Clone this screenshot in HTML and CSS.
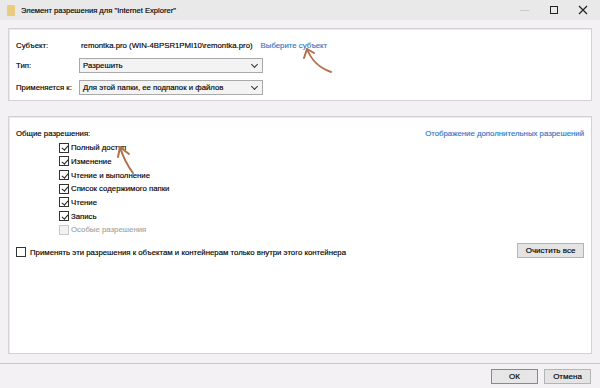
FILE: index.html
```html
<!DOCTYPE html>
<html lang="ru">
<head>
  <meta charset="UTF-8">
  <title>Элемент разрешения для "Internet Explorer"</title>
  <link rel="stylesheet" href="styles.css">
</head>
<body>
  <div class="window">
    <div class="titlebar">
      <span class="folder"></span>
      <span class="title">Элемент разрешения для "Internet Explorer"</span>
      <div class="controls">
        <span class="ctl min">&#8212;</span>
        <span class="ctl max"></span>
        <span class="ctl close">
          <svg width="10" height="10" viewBox="0 0 10 10"><path d="M1 1L9 9M9 1L1 9" stroke="#222" stroke-width="1.2"/></svg>
        </span>
      </div>
    </div>

    <div class="content">
      <div class="panel panel-top">
        <div class="row row-subject">
          <span class="label">Субъект:</span>
          <span class="value">remontka.pro (WIN-4BPSR1PMI10\remontka.pro)</span>
          <a class="link">Выберите субъект</a>
        </div>
        <div class="row row-type">
          <span class="label">Тип:</span>
          <div class="select"><span>Разрешить</span><span class="chev"></span></div>
        </div>
        <div class="row row-applies">
          <span class="label">Применяется к:</span>
          <div class="select"><span>Для этой папки, ее подпапок и файлов</span><span class="chev"></span></div>
        </div>
      </div>

      <div class="panel panel-perms">
        <div class="perms-head">
          <span>Общие разрешения:</span>
          <a class="link">Отображение дополнительных разрешений</a>
        </div>
        <ul class="perm-list">
          <li><span class="box checked"></span>Полный доступ</li>
          <li><span class="box checked"></span>Изменение</li>
          <li><span class="box checked"></span>Чтение и выполнение</li>
          <li><span class="box checked"></span>Список содержимого папки</li>
          <li><span class="box checked"></span>Чтение</li>
          <li><span class="box checked"></span>Запись</li>
          <li class="disabled"><span class="box"></span>Особые разрешения</li>
        </ul>
        <div class="apply-row">
          <label class="apply"><span class="box"></span>Применять эти разрешения к объектам и контейнерам только внутри этого контейнера</label>
          <button class="btn">Очистить все</button>
        </div>
      </div>
    </div>

    <div class="footer">
      <button class="btn btn-ok">ОК</button>
      <button class="btn">Отмена</button>
    </div>

    <!-- стрелки-пометки поверх окна -->
    <svg class="arrow arrow-link" width="40" height="34" viewBox="0 0 40 34">
      <path d="M6 2 C10 12 16 20 30 25" stroke="#b0714c" stroke-width="2" fill="none" stroke-linecap="round"/>
      <path d="M6 2 L3 11 M6 2 L13 6" stroke="#b0714c" stroke-width="2" fill="none" stroke-linecap="round"/>
    </svg>
    <svg class="arrow arrow-full" width="30" height="32" viewBox="0 0 30 32">
      <path d="M4 2 C7 12 11 20 17 28" stroke="#b0714c" stroke-width="2" fill="none" stroke-linecap="round"/>
      <path d="M4 2 L2 12 M4 2 L13 9" stroke="#b0714c" stroke-width="2" fill="none" stroke-linecap="round"/>
    </svg>
  </div>
</body>
</html>
```

FILE: styles.css
```css
body {
  margin: 0;
  font-family: "Liberation Sans", Arial, sans-serif;
  font-size: 7.8px;
  color: #000;
  -webkit-text-stroke: 0.15px currentColor;
}

.window {
  position: relative;
  width: 600px;
  height: 388px;
  background: #f4f1f4;
  display: flex;
  flex-direction: column;
}

.titlebar {
  height: 20px;
  background: #e9e9e9;
  display: flex;
  align-items: center;
}

.folder {
  width: 8px;
  height: 11px;
  margin-left: 7px;
  margin-right: 6px;
  background: #ebcb80;
  border-radius: 1px;
}

.title {
  flex: 1;
  font-size: 7.6px;
}

.controls {
  display: flex;
  align-items: center;
  height: 20px;
}

.ctl {
  width: 29px;
  display: flex;
  justify-content: center;
  align-items: center;
}

.ctl.min {
  color: #c4c4c4;
  font-size: 9px;
}

.ctl.max::before {
  content: "";
  width: 8px;
  height: 8px;
  border: 1.5px solid #222;
  box-sizing: border-box;
}

.ctl.close {
  margin-right: 3px;
}

.content {
  padding: 8px 8px 0;
}

.panel {
  background: #fff;
  border: 1px solid #d4d2d4;
  box-shadow: inset 1px 1px 0 #eaeaea;
}

.panel-top {
  height: 73px;
  box-sizing: border-box;
  padding: 8px 0 0 7px;
}

.row {
  display: flex;
  align-items: center;
  height: 16px;
}

.row-type {
  margin-top: 5px;
  height: 15px;
}

.row-applies {
  margin-top: 7px;
  height: 15px;
}

.label {
  width: 63px;
  flex-shrink: 0;
}

.value {
  margin-left: 2px;
}

.link {
  color: #2f76c8;
  margin-left: 8px;
}

.select {
  width: 184px;
  height: 15px;
  box-sizing: border-box;
  border: 1px solid #a9a9a9;
  background: #f3f3f3;
  display: flex;
  align-items: center;
  justify-content: space-between;
  padding: 0 5px 0 3px;
}

.chev {
  width: 4px;
  height: 4px;
  border-right: 1.3px solid #333;
  border-bottom: 1.3px solid #333;
  transform: rotate(45deg);
  margin-top: -3px;
}

.panel-perms {
  margin-top: 15px;
  height: 238px;
  box-sizing: border-box;
  padding: 10px 7px 0 7px;
}

.perms-head {
  display: flex;
  justify-content: space-between;
  height: 12px;
  align-items: center;
}

.perm-list {
  list-style: none;
  margin: 2px 0 0 43px;
  padding: 0;
}

.perm-list li {
  height: 13.67px;
  display: flex;
  align-items: center;
}

.box {
  width: 10px;
  height: 10px;
  box-sizing: border-box;
  border: 1px solid #333;
  background: #fff;
  margin-right: 2px;
  flex-shrink: 0;
  position: relative;
}

.box.checked::after {
  content: "";
  position: absolute;
  left: 2.5px;
  top: 0.5px;
  width: 2.5px;
  height: 5px;
  border-right: 1.6px solid #222;
  border-bottom: 1.6px solid #222;
  transform: rotate(40deg);
}

.perm-list li.disabled {
  color: #a6a6a6;
}

.perm-list li.disabled .box {
  border-color: #c8c8c8;
  background: #f2f2f2;
}

.apply-row {
  display: flex;
  justify-content: space-between;
  align-items: center;
  margin-top: 6px;
}

.apply {
  display: flex;
  align-items: center;
  margin-top: 4px;
}

.apply .box {
  margin-right: 4px;
}

.btn {
  font-family: inherit;
  font-size: 8px;
  color: #000;
  -webkit-text-stroke: 0.15px currentColor;
  height: 15px;
  width: 67px;
  padding: 0;
  background: #e4e4e4;
  border: 1px solid #b4b4b4;
  border-radius: 0;
}

.footer {
  margin-top: 9px;
  border-top: 1px solid #c9c7c9;
  flex: 1;
  display: flex;
  justify-content: flex-end;
  align-items: flex-start;
  gap: 6px;
  padding: 5px 9px 0 0;
}

.footer .btn {
  width: 47px;
}

.btn-ok {
  border-color: #4d97e0;
  background: #e6e6e6;
}

.arrow {
  position: absolute;
}

.arrow-link {
  left: 301px;
  top: 47px;
}

.arrow-full {
  left: 116px;
  top: 145px;
}
```
